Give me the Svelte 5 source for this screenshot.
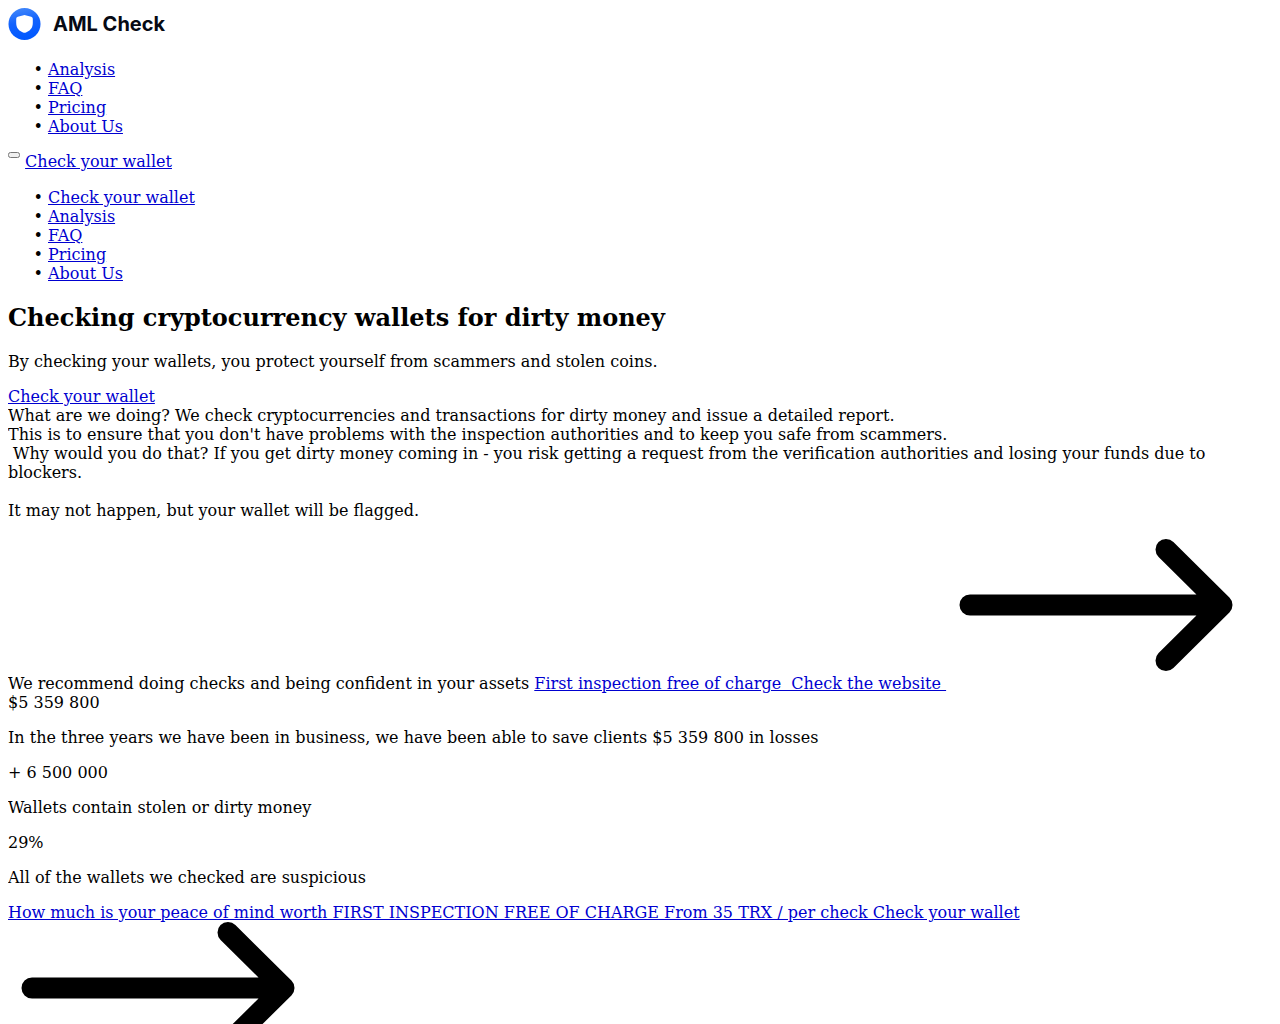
<script>
  const navLinks = ["Analysis", "FAQ", "Pricing", "About Us"];
  const mobileLinks = ["Check your wallet", ...navLinks];

  const stats = [
    { value: "+ 6 500 000", text: "Wallets contain stolen or dirty money" },
    { value: "29%", text: "All of the wallets we checked are suspicious" },
  ];
</script>

<style>
  :global(body) {
    margin: 8px;
    background: #fff;
    color: #000;
    font-family: "DejaVu Serif", serif;
    font-size: 16px;
    line-height: 19px;
    overflow-x: hidden;
  }
  .logo {
    display: flex;
    align-items: center;
    gap: 12px;
    width: fit-content;
    margin-bottom: 20px;
    color: #060a14;
    font-family: Inter, sans-serif;
    font-size: 20px;
    font-weight: 650;
    line-height: 32px;
    text-decoration: none;
  }
  a {
    color: #0000d0;
  }
  ul {
    margin: 16px 0;
    padding-left: 40px;
    list-style-type: "• ";
  }
  .actions {
    line-height: 20px;
  }
  .burger {
    width: 12px;
    height: 6px;
    padding: 0;
    vertical-align: top;
  }
  h1 {
    margin: 20px 0;
    font-size: 24px;
    line-height: 29px;
  }
  p {
    margin: 16px 0;
  }
</style>

<header>
  <a class="logo" href="#top">
    <svg width="33" height="32" viewBox="0 0 33 32">
      <defs>
        <linearGradient id="badge" x1="0.3" y1="0" x2="0.5" y2="1">
          <stop offset="0" stop-color="#4288fa" />
          <stop offset="0.45" stop-color="#1262fd" />
          <stop offset="1" stop-color="#0058ff" />
        </linearGradient>
      </defs>
      <circle cx="16.5" cy="16" r="16" fill="url(#badge)" />
      <path d="M15.600 7.200 Q16.500 6.900 17.400 7.200 L23.200 8.700 Q24.800 9.200 24.800 10.800 V15 C24.800 20.300 21.800 22.800 18 24.500 Q16.500 25.200 15 24.500 C11.200 22.800 8.200 20.300 8.200 15 V10.800 Q8.200 9.200 9.800 8.700 Z" fill="#fff" />
    </svg>
    AML Check
  </a>
  <ul>
    {#each navLinks as link}
      <li><a href="#top">{link}</a></li>
    {/each}
  </ul>
  <div class="actions">
    <button class="burger" aria-label="Menu"></button>
    <a href="#check">Check your wallet</a>
  </div>
  <ul>
    {#each mobileLinks as link}
      <li><a href="#top">{link}</a></li>
    {/each}
  </ul>
</header>

{#snippet arrow()}
  <svg width="300" height="150" viewBox="0 0 300 150">
    <path d="M24 66 H276 M220 10.500 L276 66 L220 121.500" fill="none" stroke="#000" stroke-width="21" stroke-linecap="round" stroke-linejoin="round" />
  </svg>
{/snippet}

<main>
  <h1>Checking cryptocurrency wallets for dirty money</h1>
  <p>By checking your wallets, you protect yourself from scammers and stolen coins.</p>
  <a href="#check">Check your wallet</a>
  <div>What are we doing? We check cryptocurrencies and transactions for dirty money and issue a detailed report.</div>
  <div>
    This is to ensure that you don't have problems with the inspection authorities and to keep you safe from scammers.<br />
    &nbsp;Why would you do that? If you get dirty money coming in - you risk getting a request from the verification authorities and losing your funds due to blockers.<br /><br />
    It may not happen, but your wallet will be flagged.<br /><br />
    We recommend doing checks and being confident in your assets
    <a href="#check">First inspection free of charge &nbsp;Check the website&nbsp;{@render arrow()}</a>
  </div>
  <div>$5 359 800</div>
  <p>In the three years we have been in business, we have been able to save clients $5 359 800 in losses</p>
  {#each stats as stat}
    <div>{stat.value}</div>
    <p>{stat.text}</p>
  {/each}
  <a href="#check">
    How much is your peace of mind worth FIRST INSPECTION FREE OF CHARGE From 35 TRX / per check Check your wallet
    {@render arrow()}
  </a>
</main>
